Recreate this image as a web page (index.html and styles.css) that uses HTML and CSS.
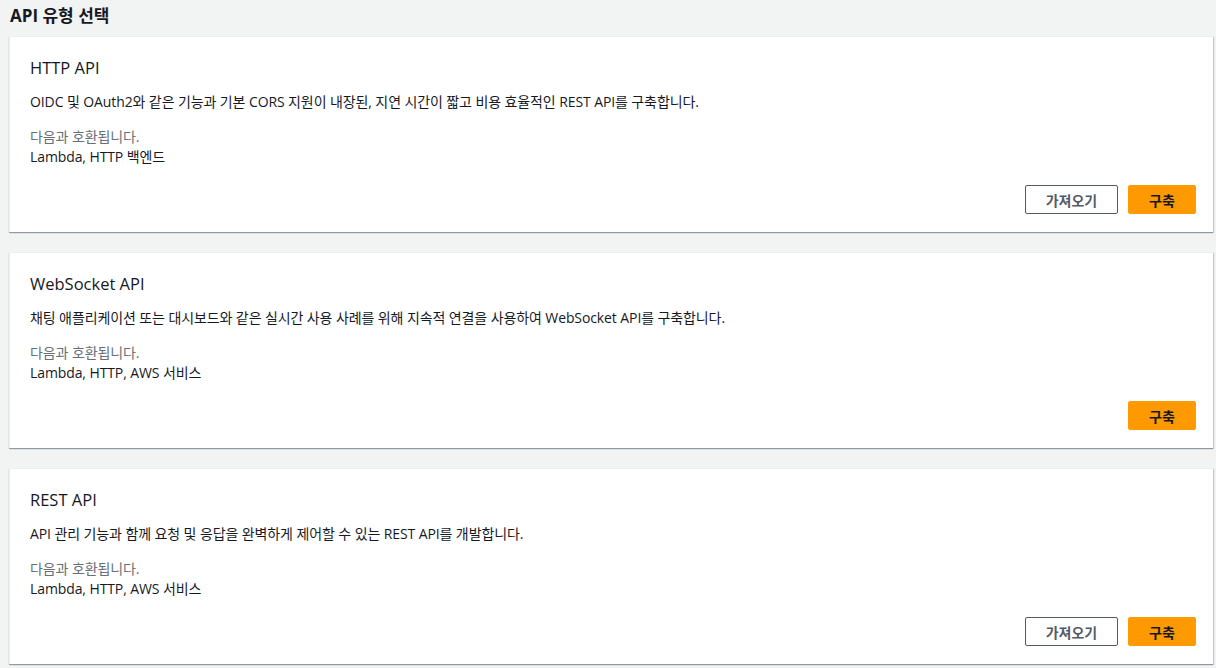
FILE: index.html
```html
<!DOCTYPE html>
<html lang="ko">
<head>
<meta charset="utf-8">
<title>API 유형 선택</title>
<link rel="stylesheet" href="styles.css">
</head>
<body>
<h1 class="page-title">API 유형 선택</h1>
<div class="cards">
  <section class="card">
    <h2 class="card-title">HTTP API</h2>
    <p class="card-desc">OIDC 및 OAuth2와 같은 기능과 기본 CORS 지원이 내장된, 지연 시간이 짧고 비용 효율적인 REST API를 구축합니다.</p>
    <div class="compat">
      <div class="compat-label">다음과 호환됩니다.</div>
      <div class="compat-list">Lambda, HTTP 백엔드</div>
    </div>
    <div class="actions">
      <button class="btn btn-normal">가져오기</button>
      <button class="btn btn-primary">구축</button>
    </div>
  </section>
  <section class="card">
    <h2 class="card-title">WebSocket API</h2>
    <p class="card-desc">채팅 애플리케이션 또는 대시보드와 같은 실시간 사용 사례를 위해 지속적 연결을 사용하여 WebSocket API를 구축합니다.</p>
    <div class="compat">
      <div class="compat-label">다음과 호환됩니다.</div>
      <div class="compat-list">Lambda, HTTP, AWS 서비스</div>
    </div>
    <div class="actions">
      <button class="btn btn-primary">구축</button>
    </div>
  </section>
  <section class="card">
    <h2 class="card-title">REST API</h2>
    <p class="card-desc">API 관리 기능과 함께 요청 및 응답을 완벽하게 제어할 수 있는 REST API를 개발합니다.</p>
    <div class="compat">
      <div class="compat-label">다음과 호환됩니다.</div>
      <div class="compat-list">Lambda, HTTP, AWS 서비스</div>
    </div>
    <div class="actions">
      <button class="btn btn-normal">가져오기</button>
      <button class="btn btn-primary">구축</button>
    </div>
  </section>
</div>
</body>
</html>
```
FILE: styles.css
```css
html, body {
  margin: 0;
  padding: 0;
  background: #f2f3f3;
}
body {
  font-family: "Open Sans", "Noto Sans CJK KR", sans-serif;
  color: #16191f;
  padding: 0 3px 0 9px;
  height: 668px;
  overflow: hidden;
}
.page-title {
  margin: 0;
  padding-left: 1px;
  font-size: 17px;
  font-weight: 700;
  line-height: 32px;
  height: 36px;
}
.cards {
  display: flex;
  flex-direction: column;
  gap: 20px;
}
.card {
  background: #fff;
  height: 196px;
  box-sizing: border-box;
  border-top: 1px solid #eaeded;
  border-left: 1px solid #eaeded;
  box-shadow: 0 1px 1px 0 rgba(0, 28, 36, 0.3), 1px 1px 1px 0 rgba(0, 28, 36, 0.15);
  padding: 20px 17px 0 20px;
  display: flex;
  flex-direction: column;
}
.card-title {
  margin: 0;
  font-size: 16.5px;
  font-weight: 400;
  line-height: 22px;
}
.card-desc {
  margin: 13px 0 0;
  font-size: 14px;
  line-height: 20px;
  letter-spacing: -0.1px;
}
.compat {
  margin-top: 15px;
  font-size: 14px;
  line-height: 20px;
  letter-spacing: -0.1px;
}
.compat-label {
  color: #687078;
}
.actions {
  margin-top: 18px;
  display: flex;
  justify-content: flex-end;
  gap: 10px;
}
.btn {
  font-family: "Open Sans", "Noto Sans CJK KR", sans-serif;
  font-size: 14px;
  font-weight: 700;
  height: 29px;
  border-radius: 2px;
  padding: 0;
  cursor: pointer;
  box-sizing: border-box;
}
.btn-normal {
  background: #fff;
  border: 1px solid #545b64;
  color: #545b64;
  width: 93px;
}
.btn-primary {
  background: #ff9900;
  border: 1px solid #ff9900;
  color: #16191f;
  width: 68px;
}
```
